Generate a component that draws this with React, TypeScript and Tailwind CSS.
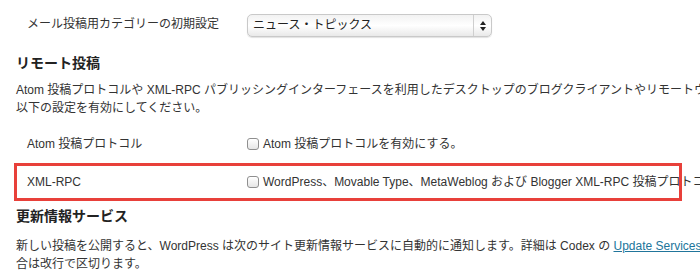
const font = "font-['Liberation_Sans','Noto_Sans_CJK_JP',sans-serif]";

function Checkbox() {
  return (
    <span className="mr-[4px] inline-block h-[12px] w-[12px] shrink-0 rounded-[3px] border border-[#8f8f8f] bg-gradient-to-b from-white to-[#e6e6e6] shadow-[inset_0_1px_0_#fff]" />
  );
}

function SelectBox() {
  return (
    <div className="flex h-[23px] w-[245px] items-stretch rounded-[5px] border border-[#c9c9c9] bg-gradient-to-b from-[#f2f2f2] via-white to-[#e9e9e9] shadow-[0_1px_1px_rgba(0,0,0,0.12)]">
      <span className="flex-1 pl-[5px] text-[12px] leading-[21px] text-[#222]">ニュース・トピックス</span>
      <span className="flex w-[18px] items-center justify-center border-l border-[#cfcfcf]">
        <svg width="6" height="10" viewBox="0 0 6 10">
          <path d="M3 0 L6 4 L0 4 Z" fill="#222" />
          <path d="M0 6 L6 6 L3 10 Z" fill="#222" />
        </svg>
      </span>
    </div>
  );
}

export default function App() {
  return (
    <div className={`${font} h-[278px] w-[700px] overflow-hidden bg-white text-[12px] text-[#333]`}>
      <div className="pl-[16px]">
        <div className="flex items-start pt-[14px]">
          <div className="w-[231px] shrink-0 pl-[11px] leading-[20px]">メール投稿用カテゴリーの初期設定</div>
          <SelectBox />
        </div>

        <h3 className="mt-[16px] text-[14px] font-bold leading-[20px] text-[#222]">リモート投稿</h3>
        <p className="mt-[8px] whitespace-nowrap leading-[18px]">
          Atom 投稿プロトコルや XML-RPC パブリッシングインターフェースを利用したデスクトップのブログクライアントやリモートウェブサイトから投稿する場合は、
          <br />
          以下の設定を有効にしてください。
        </p>

        <div className="mt-[8px] flex items-center py-[10px] leading-[18px]">
          <div className="w-[231px] shrink-0 pl-[11px]">Atom 投稿プロトコル</div>
          <label className="flex items-center whitespace-nowrap">
            <Checkbox />
            Atom 投稿プロトコルを有効にする。
          </label>
        </div>

        <div className="relative -ml-[2px] flex h-[38px] w-[668px] items-center leading-[18px]">
          <div className="w-[233px] shrink-0 pl-[13px]">XML-RPC</div>
          <label className="flex shrink-0 items-center whitespace-nowrap">
            <Checkbox />
            WordPress、Movable Type、MetaWeblog および Blogger XML-RPC 投稿プロトコルを有効にする。
          </label>
          <div className="pointer-events-none absolute inset-0 border-[3px] border-[#e8403a]" />
        </div>

        <h3 className="mt-[5px] text-[14px] font-bold leading-[20px] text-[#222]">更新情報サービス</h3>
        <p className="mt-[11px] whitespace-nowrap leading-[18px]">
          新しい投稿を公開すると、WordPress は次のサイト更新情報サービスに自動的に通知します。詳細は Codex の{" "}
          <a href="#" className="text-[#21759b] underline">Update Services</a>{" "}
          を参照してください。複数のサービスの URL を入力する場
          <br />
          合は改行で区切ります。
        </p>
      </div>
    </div>
  );
}
